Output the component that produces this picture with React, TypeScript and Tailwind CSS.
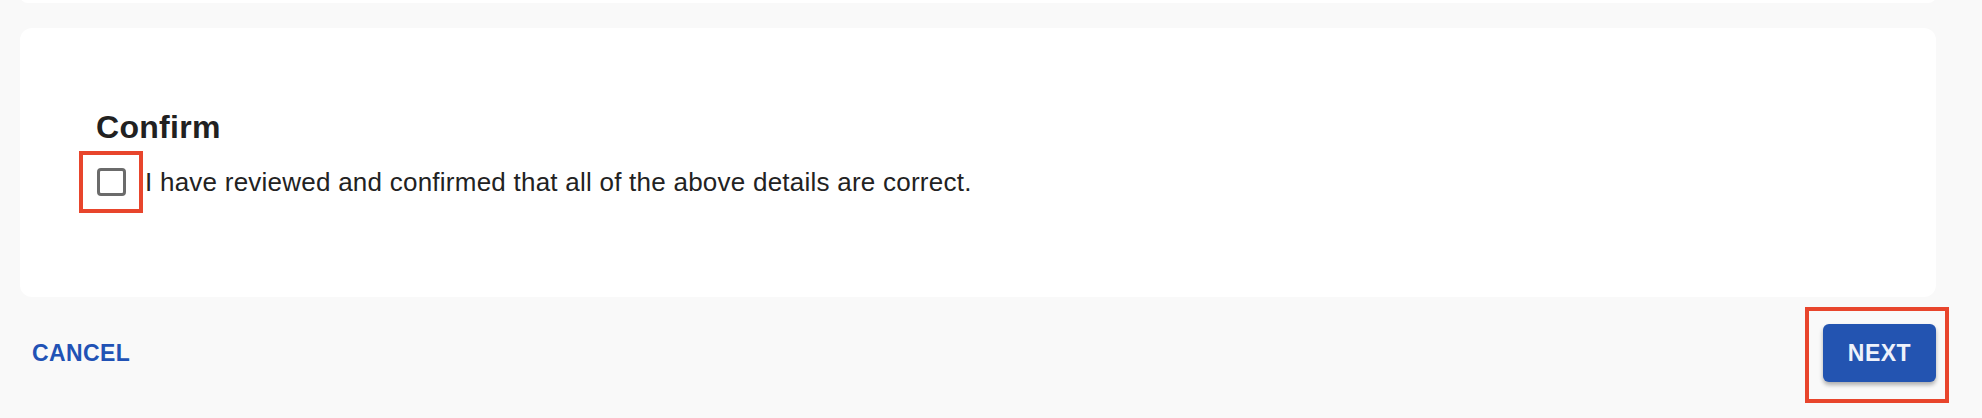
import React, { useState } from "react";

// Confirmation step of a multi-step form
const App: React.FC = () => {
  const [checked, setChecked] = useState<boolean>(false);

  return (
    <div
      className="min-h-screen bg-[#f9f9f9] overflow-hidden"
      style={{ fontFamily: '"Liberation Sans", Arial, sans-serif' }}
    >
      <div className="w-[1916px] ml-5">
        {/* Previous section (scrolled off the top) */}
        <div className="-mt-3 h-[15px] rounded-xl bg-white" />

        {/* Confirm card */}
        <div className="mt-[25px] h-[269px] rounded-xl bg-white pl-[76px] pt-[80px]">
          <h2 className="text-[32px] leading-[1.2] font-bold tracking-[0.3px] text-[#212121]">
            Confirm
          </h2>
          <label className="mt-[5px] flex items-center cursor-pointer">
            <span className="relative -ml-[17px] flex h-[62px] w-[64px] items-center justify-center">
              <input
                type="checkbox"
                className="sr-only"
                checked={checked}
                onChange={() => setChecked(!checked)}
              />
              <span
                className={
                  checked
                    ? "h-[28px] w-[29px] rounded-[4px] border-[3.5px] border-[#2354b1] bg-[#2354b1]"
                    : "h-[28px] w-[29px] rounded-[4px] border-[3.5px] border-[#6b6b6b]"
                }
              />
              {/* highlight */}
              <span className="absolute inset-0 border-4 border-[#e8452c]" />
            </span>
            <span className="ml-[2px] text-[26px] leading-[1.5] tracking-[0.24px] text-[#222222]">
              I have reviewed and confirmed that all of the above details are correct.
            </span>
          </label>
        </div>

        {/* Actions */}
        <div className="mt-[27px] flex h-[58px] items-center justify-between">
          <button className="pl-[12px] text-[23px] font-bold uppercase tracking-[0.4px] text-[#2152b5]">
            Cancel
          </button>
          <div className="relative">
            <button className="h-[58px] w-[113px] rounded-[6px] bg-[#2354b1] text-[23px] font-bold uppercase tracking-[0.5px] text-[#eef2fb] shadow-[0_3px_4px_rgba(0,0,0,0.3)]">
              Next
            </button>
            {/* highlight */}
            <span className="pointer-events-none absolute left-[-18px] right-[-13px] top-[-17px] bottom-[-21px] border-4 border-[#e8452c]" />
          </div>
        </div>
      </div>
    </div>
  );
};

export default App;
